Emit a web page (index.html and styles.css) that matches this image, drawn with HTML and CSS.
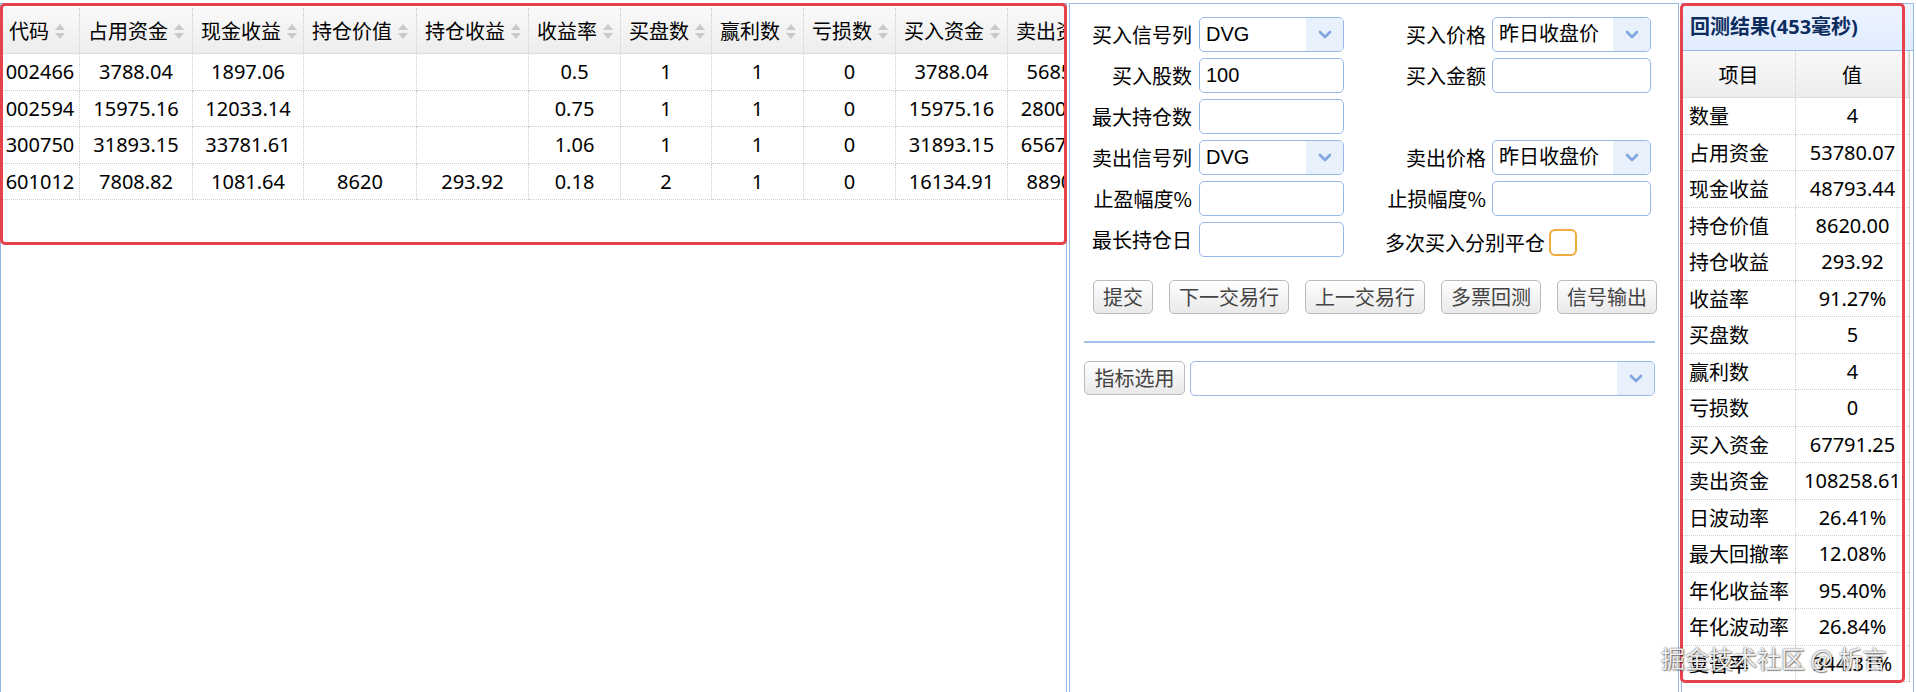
FILE: index.html
```html
<!DOCTYPE html>
<html lang="zh-CN">
<head>
    <meta charset="UTF-8">
    <title>回测</title>
    <link rel="stylesheet" href="styles.css">
</head>
<body>
    <div class="panel left">
        <div class="grid-wrap">
            <table class="grid">
                <colgroup>
                    <col style="width:79px"><col style="width:113px"><col style="width:111px"><col style="width:113px">
                    <col style="width:112px"><col style="width:92px"><col style="width:91px"><col style="width:92px">
                    <col style="width:92px"><col style="width:112px"><col style="width:112px">
                </colgroup>
                <thead>
                    <tr>
                        <th>代码<span class="sort"></span></th>
                        <th>占用资金<span class="sort"></span></th>
                        <th>现金收益<span class="sort"></span></th>
                        <th>持仓价值<span class="sort"></span></th>
                        <th>持仓收益<span class="sort"></span></th>
                        <th>收益率<span class="sort"></span></th>
                        <th>买盘数<span class="sort"></span></th>
                        <th>赢利数<span class="sort"></span></th>
                        <th>亏损数<span class="sort"></span></th>
                        <th>买入资金<span class="sort"></span></th>
                        <th>卖出资金<span class="sort"></span></th>
                    </tr>
                </thead>
                <tbody>
                    <tr><td>002466</td><td>3788.04</td><td>1897.06</td><td></td><td></td><td>0.5</td><td>1</td><td>1</td><td>0</td><td>3788.04</td><td>5685.10</td></tr>
                    <tr><td>002594</td><td>15975.16</td><td>12033.14</td><td></td><td></td><td>0.75</td><td>1</td><td>1</td><td>0</td><td>15975.16</td><td>28008.30</td></tr>
                    <tr><td>300750</td><td>31893.15</td><td>33781.61</td><td></td><td></td><td>1.06</td><td>1</td><td>1</td><td>0</td><td>31893.15</td><td>65674.76</td></tr>
                    <tr><td>601012</td><td>7808.82</td><td>1081.64</td><td>8620</td><td>293.92</td><td>0.18</td><td>2</td><td>1</td><td>0</td><td>16134.91</td><td>8890.55</td></tr>
                </tbody>
            </table>
        </div>
        <div class="mark mark-left"></div>
    </div>

    <div class="panel middle">
        <div class="form">
            <label class="lbl">买入信号列</label>
            <div class="combo"><span class="combo-text">DVG</span><span class="combo-arrow"><svg width="14" height="9" viewBox="0 0 14 9"><polyline points="2,2 7,7 12,2" fill="none" stroke="#7fa6de" stroke-width="2.6" stroke-linecap="round" stroke-linejoin="round"/></svg></span></div>
            <label class="lbl lbl2">买入价格</label>
            <div class="combo"><span class="combo-text">昨日收盘价</span><span class="combo-arrow"><svg width="14" height="9" viewBox="0 0 14 9"><polyline points="2,2 7,7 12,2" fill="none" stroke="#7fa6de" stroke-width="2.6" stroke-linecap="round" stroke-linejoin="round"/></svg></span></div>

            <label class="lbl">买入股数</label>
            <input class="box" type="text" value="100">
            <label class="lbl lbl2">买入金额</label>
            <input class="box" type="text" value="">

            <label class="lbl">最大持仓数</label>
            <input class="box" type="text" value="">
            <span></span>
            <span></span>

            <label class="lbl">卖出信号列</label>
            <div class="combo"><span class="combo-text">DVG</span><span class="combo-arrow"><svg width="14" height="9" viewBox="0 0 14 9"><polyline points="2,2 7,7 12,2" fill="none" stroke="#7fa6de" stroke-width="2.6" stroke-linecap="round" stroke-linejoin="round"/></svg></span></div>
            <label class="lbl lbl2">卖出价格</label>
            <div class="combo"><span class="combo-text">昨日收盘价</span><span class="combo-arrow"><svg width="14" height="9" viewBox="0 0 14 9"><polyline points="2,2 7,7 12,2" fill="none" stroke="#7fa6de" stroke-width="2.6" stroke-linecap="round" stroke-linejoin="round"/></svg></span></div>

            <label class="lbl">止盈幅度%</label>
            <input class="box" type="text" value="">
            <label class="lbl lbl2">止损幅度%</label>
            <input class="box" type="text" value="">

            <label class="lbl">最长持仓日</label>
            <input class="box" type="text" value="">
            <div class="check-row">多次买入分别平仓<span class="check"></span></div>
        </div>

        <div class="actions">
            <button class="btn">提交</button>
            <button class="btn">下一交易行</button>
            <button class="btn">上一交易行</button>
            <button class="btn">多票回测</button>
            <button class="btn">信号输出</button>
        </div>

        <div class="divider"></div>

        <div class="indicator">
            <button class="btn">指标选用</button>
            <div class="combo wide"><span class="combo-text"></span><span class="combo-arrow"><svg width="14" height="9" viewBox="0 0 14 9"><polyline points="2,2 7,7 12,2" fill="none" stroke="#7fa6de" stroke-width="2.6" stroke-linecap="round" stroke-linejoin="round"/></svg></span></div>
        </div>
    </div>

    <div class="panel right">
        <div class="panel-title">回测结果(453毫秒)</div>
        <table class="result">
            <colgroup><col style="width:114px"><col style="width:113px"></colgroup>
            <thead>
                <tr><th>项目</th><th>值</th></tr>
            </thead>
            <tbody>
                <tr><td>数量</td><td>4</td></tr>
                <tr><td>占用资金</td><td>53780.07</td></tr>
                <tr><td>现金收益</td><td>48793.44</td></tr>
                <tr><td>持仓价值</td><td>8620.00</td></tr>
                <tr><td>持仓收益</td><td>293.92</td></tr>
                <tr><td>收益率</td><td>91.27%</td></tr>
                <tr><td>买盘数</td><td>5</td></tr>
                <tr><td>赢利数</td><td>4</td></tr>
                <tr><td>亏损数</td><td>0</td></tr>
                <tr><td>买入资金</td><td>67791.25</td></tr>
                <tr><td>卖出资金</td><td>108258.61</td></tr>
                <tr><td>日波动率</td><td>26.41%</td></tr>
                <tr><td>最大回撤率</td><td>12.08%</td></tr>
                <tr><td>年化收益率</td><td>95.40%</td></tr>
                <tr><td>年化波动率</td><td>26.84%</td></tr>
                <tr><td>夏普率</td><td>344.31%</td></tr>
            </tbody>
        </table>
        <div class="mark mark-right"></div>
        <div class="watermark">掘金技术社区 @ 析言</div>
    </div>
</body>
</html>
```

FILE: styles.css
```css
:root {
    --panel-border: #95b8e7;
    --grid-line: #cccccc;
    --mark: #e5424b;
}

* {
    box-sizing: border-box;
}

body {
    margin: 0;
    padding-top: 3px;
    width: 1916px;
    height: 692px;
    overflow: hidden;
    display: flex;
    gap: 2px;
    font-family: "Noto Sans", "Noto Sans CJK SC", sans-serif;
    font-size: 20px;
    color: #000;
    background: #fff;
}

.panel {
    position: relative;
    height: 689px;
    border: 1px solid var(--panel-border);
    border-bottom: none;
}

.mark {
    position: absolute;
    border: 3px solid var(--mark);
    border-radius: 5px;
    pointer-events: none;
}

/* left: result grid */
.left {
    width: 1067px;
}

.grid-wrap {
    margin-top: 4px;
    width: 1065px;
    overflow: hidden;
}

.grid {
    border-collapse: separate;
    border-spacing: 0;
    table-layout: fixed;
    width: 1109px;
}

.grid th,
.result th {
    font-weight: normal;
    background: linear-gradient(to bottom, #f9f9f9 0, #ededed 100%);
    border-right: 1px dotted var(--grid-line);
    border-bottom: 1px solid #dcdcdc;
    white-space: nowrap;
}

.grid th {
    height: 46px;
    padding: 0 0 0 8px;
    text-align: left;
}

.grid td {
    height: 36.5px;
    padding: 0;
    text-align: center;
    white-space: nowrap;
    border-right: 1px dotted var(--grid-line);
    border-bottom: 1px dotted var(--grid-line);
}

.sort {
    display: inline-flex;
    flex-direction: column;
    gap: 3px;
    margin-left: 6px;
    vertical-align: middle;
    position: relative;
    top: -2px;
}

.sort::before,
.sort::after {
    content: "";
    width: 0;
    height: 0;
    border-left: 5px solid transparent;
    border-right: 5px solid transparent;
}

.sort::before {
    border-bottom: 6px solid #c9c9c9;
}

.sort::after {
    border-top: 6px solid #c9c9c9;
}

.mark-left {
    left: -1px;
    top: -1px;
    width: 1067px;
    height: 242px;
}

/* middle: parameters */
.middle {
    width: 610px;
    padding-top: 13px;
}

.form {
    margin-left: 16px;
    display: grid;
    grid-template-columns: 113px 145px 148px 159px;
    grid-auto-rows: 35px;
    row-gap: 6px;
}

.lbl {
    align-self: center;
    text-align: right;
    padding-right: 7px;
    white-space: nowrap;
    font-family: "Noto Sans CJK SC", sans-serif;
}

.lbl2 {
    padding-right: 6px;
}

.box,
.combo {
    height: 35px;
    border: 1px solid var(--panel-border);
    border-radius: 5px;
    background: #fff;
    font-family: "Liberation Sans", "Noto Sans CJK SC", sans-serif;
    font-size: 20px;
    color: #000;
}

.box {
    width: 100%;
    margin: 0;
    padding: 0 6px;
    outline: none;
}

.combo {
    display: flex;
    overflow: hidden;
}

.combo-text {
    flex: 1;
    padding-left: 6px;
    line-height: 33px;
    white-space: nowrap;
}

.combo-arrow {
    width: 37px;
    display: flex;
    align-items: center;
    justify-content: center;
    background: #e8f0fb;
}

.check-row {
    grid-column: 3 / span 2;
    align-self: end;
    display: flex;
    align-items: center;
    padding-left: 41px;
    white-space: nowrap;
    font-family: "Noto Sans CJK SC", sans-serif;
}

.check {
    display: inline-block;
    width: 28px;
    height: 27px;
    margin-left: 4px;
    border: 2px solid #f0ac3c;
    border-radius: 6px;
    background: #fff;
}

.actions {
    display: flex;
    gap: 16px;
    margin: 23px 0 0 23px;
}

.btn {
    height: 34px;
    padding: 0 9px;
    border: 1px solid #bbbbbb;
    border-radius: 5px;
    background: linear-gradient(to bottom, #ffffff 0, #e9e9e9 100%);
    font-family: "Noto Sans CJK SC", sans-serif;
    font-size: 20px;
    line-height: 32px;
    color: #444;
    white-space: nowrap;
}

.divider {
    height: 2px;
    margin: 27px 23px 0 14px;
    background: #a6c1e9;
}

.indicator {
    display: flex;
    gap: 5px;
    margin: 18px 23px 0 14px;
}

.indicator .btn {
    width: 101px;
}

.combo.wide {
    flex: 1;
}

/* right: summary */
.right {
    width: 233px;
}

.panel-title {
    height: 47px;
    padding-left: 8px;
    line-height: 46px;
    font-weight: bold;
    color: #0e2d5f;
    background: linear-gradient(to bottom, #eff5ff 0, #e0ecff 100%);
    border-bottom: 1px solid var(--panel-border);
}

.result {
    border-collapse: separate;
    border-spacing: 0;
    table-layout: fixed;
    width: 227px;
    border-right: 1px solid #cfcfcf;
}

.result th {
    height: 47px;
    padding: 0;
    text-align: center;
}

.result td {
    height: 36.5px;
    padding: 0;
    white-space: nowrap;
    border-right: 1px dotted var(--grid-line);
    border-bottom: 1px dotted var(--grid-line);
}

.result td:first-child {
    padding-left: 7px;
}

.result td:last-child {
    text-align: center;
    border-right: none;
}

.mark-right {
    left: -2px;
    top: -1px;
    width: 225px;
    height: 680px;
}

.watermark {
    position: absolute;
    left: -21px;
    top: 641px;
    font-family: "Noto Sans CJK SC", sans-serif;
    font-size: 24px;
    line-height: 26px;
    white-space: nowrap;
    color: rgba(255, 255, 255, 0.92);
    text-shadow: 0 0 2px rgba(0, 0, 0, 0.75), 1px 1px 1px rgba(0, 0, 0, 0.35);
}
```
